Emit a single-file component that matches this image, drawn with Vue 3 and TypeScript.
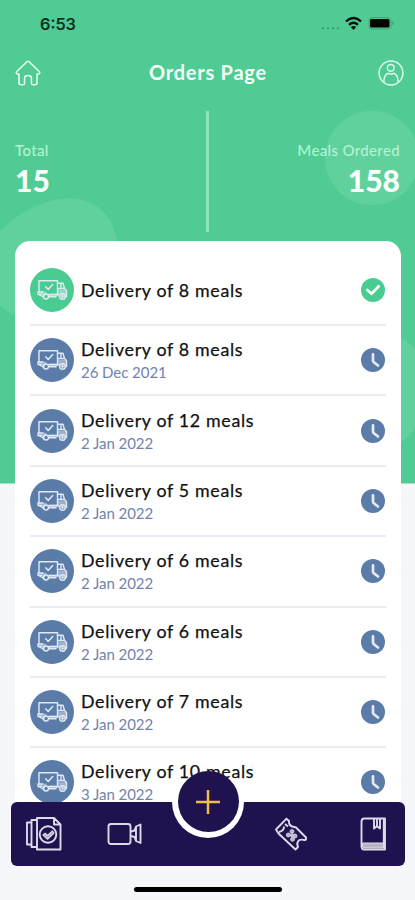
<script setup lang="ts">
interface Order {
  title: string
  date?: string
  done?: boolean
}

const orders: Order[] = [
  { title: 'Delivery of 8 meals', done: true },
  { title: 'Delivery of 8 meals', date: '26 Dec 2021' },
  { title: 'Delivery of 12 meals', date: '2 Jan 2022' },
  { title: 'Delivery of 5 meals', date: '2 Jan 2022' },
  { title: 'Delivery of 6 meals', date: '2 Jan 2022' },
  { title: 'Delivery of 6 meals', date: '2 Jan 2022' },
  { title: 'Delivery of 7 meals', date: '2 Jan 2022' },
  { title: 'Delivery of 10 meals', date: '3 Jan 2022' },
]
</script>

<template>
  <div class="screen">
    <svg class="backdrop" width="415" height="484" viewBox="0 0 415 484">
      <rect width="415" height="483.5" fill="#4fcb93" />
      <g fill="#60d09c">
        <path d="M0 231C25 206 50 198.500 72 198.500C98 198.500 116 220 117 245V300L30 319Q11 317 0 306Z" />
        <circle cx="372" cy="158" r="47.200" />
        <path d="M398 337Q409 341 415 349V428Q409 438 398 444Z" />
      </g>
    </svg>

    <div class="status">
      <span class="time">6:53</span>
      <svg width="76" height="16" viewBox="0 0 76 16">
        <g fill="#37996c">
          <circle cx="3" cy="12.300" r="1.100" /><circle cx="8" cy="12.300" r="1.100" />
          <circle cx="13" cy="12.300" r="1.100" /><circle cx="18" cy="12.300" r="1.100" />
        </g>
        <g fill="none" stroke="#07110c" stroke-width="2.300">
          <path d="M26 5.500Q33.500 -1.500 41 5.500" />
          <path d="M29 8.800Q33.500 4.600 38 8.800" />
        </g>
        <path d="M33.500 14l-2.700-2.900q2.700-2 5.400 0z" fill="#07110c" />
        <rect x="49" y="1.600" width="22" height="11.400" rx="3" fill="none" stroke="#3da577" />
        <rect x="50" y="3" width="19.500" height="8.600" rx="1.500" fill="#000" />
        <path d="M72.300 5.500v4q1.700-.7 1.700-2t-1.700-2z" fill="#3da577" />
      </svg>
    </div>

    <header class="header">
      <svg width="26" height="26" viewBox="0 0 26 26" fill="none" stroke="#e4faef" stroke-width="1.600" stroke-linejoin="round" stroke-linecap="round">
        <path d="M12 1.700Q13 .8 14 1.700L24.200 11.500Q25.400 13 23.800 14H22V22.500Q22 24.700 20 24.700H18Q16.400 24.700 16.400 23V18Q16.400 15.500 13 15.500T9.600 18V23Q9.600 24.700 8 24.700H6Q4 24.700 4 22.500V14H2.200Q.6 13 1.800 11.500Z" />
      </svg>
      <h1>Orders Page</h1>
      <svg width="26" height="26" viewBox="0 0 26 26" fill="none" stroke="#ddf8eb" stroke-width="1.500">
        <circle cx="13" cy="13" r="11.900" />
        <circle cx="12.800" cy="7.800" r="3.400" />
        <path d="M6 22.500V20Q6.500 14.500 10.500 13.300Q13 14.800 15.500 13.300Q19.500 14.500 20 20V22.500" />
      </svg>
    </header>

    <section class="summary">
      <div class="stat">
        <span class="label">Total</span>
        <strong>15</strong>
      </div>
      <div class="divider"></div>
      <div class="stat right">
        <span class="label">Meals Ordered</span>
        <strong>158</strong>
      </div>
    </section>

    <main class="card">
      <article v-for="(order, index) in orders" :key="index" class="order">
        <div class="badge" :class="{ done: order.done }">
          <svg width="32" height="22" viewBox="0 0 32 22" fill="none" stroke="#dfeaf4" stroke-width="1.400" stroke-linejoin="round" stroke-linecap="round">
            <path d="M3 12.500V1.700H21.500V15.500H13M21.500 4.200H27L28.500 9.500L30.500 11.500V17.500H29M21.500 9.500H28.500M25 4.200V9.500M20 17.700H13M5.500 15.500H2V13H7" />
            <path d="M9.700 7.800L12.200 10.500L16.700 5.500" stroke-width="1.500" />
            <path d="M13 16H22.500" stroke-width="2.600" opacity=".6" />
            <path d="M22 11.500H30V15.500H22Z" fill="#dfeaf4" opacity=".5" />
            <path d="M3 13.500H10L8 17.500Z" fill="#dfeaf4" opacity=".5" />
            <circle cx="10" cy="17.500" r="2.500" /><circle cx="26.500" cy="17.500" r="2.800" />
            <circle cx="26.500" cy="17.500" r=".7" /><path d="M3 15.500L7 18" />
          </svg>
        </div>
        <div class="info">
          <span class="title">{{ order.title }}</span>
          <span v-if="order.date" class="date">{{ order.date }}</span>
        </div>
        <svg class="state" width="24" height="24" viewBox="0 0 24 24" fill="none" stroke="#fff" stroke-linecap="round" stroke-linejoin="round">
          <circle cx="12" cy="12" r="12" :fill="order.done ? '#4acb91' : '#5b7ba8'" stroke="none" />
          <path v-if="order.done" d="M6.300 12L10.500 15.800L17.700 8.300" stroke-width="2.700" />
          <path v-else d="M12 6.300V12.500Q12 13.400 12.600 14L17 17.500" stroke="#e4ebf5" stroke-width="2.700" />
        </svg>
      </article>
    </main>

    <nav class="nav">
      <svg class="tab" width="38" height="36" viewBox="0 0 38 36" fill="none" stroke="#dddbea" stroke-width="1.900" stroke-linejoin="round">
        <path d="M12 2H29L35.500 8.500V33.500H12ZM29 2V8.500H35.500M12 4H6.500V31H12M6.500 6.500H2V28.500H6.500" />
        <circle cx="23" cy="18.500" r="8.300" />
        <path d="M18 19L20.200 17.300L22.500 19.500L27.500 15L29 17L22.500 23.200Z" fill="#aaa5c0" stroke-width="1.200" />
      </svg>
      <svg class="tab video" width="36" height="24" viewBox="0 0 36 24" fill="none" stroke="#dddbea" stroke-width="1.900" stroke-linejoin="round">
        <rect x="1.500" y="2" width="22" height="20" rx="2.500" />
        <path d="M24 9.500L27.500 8.500L29 4.500L33.500 2.500V21L29 19L27.500 15L24 14M29 5V19" />
      </svg>
      <svg class="tab ticket" width="34" height="34" viewBox="0 0 34 34" fill="none" stroke="#dddbea" stroke-width="1.900" stroke-linejoin="round">
        <path d="M2 12.500L12.500 1.700L15 4Q14.500 8 18.200 9.500Q20.500 10.200 22 10.500L32 20.500Q32.500 22.500 31 23.200Q25.500 21.500 24 24.500Q22.500 27 24 30L21.500 32.500L4.500 16.500Z" />
        <path d="M5 15Q10 14 10 9.500M11 7L14 9.500" />
        <g fill="#b8b4c9" stroke="#dddbea" stroke-width=".8">
          <circle cx="18" cy="14.500" r="2" /><circle cx="14.300" cy="18" r="2" />
          <circle cx="21" cy="19" r="2" /><circle cx="18.500" cy="22.300" r="2" />
          <circle cx="17.900" cy="18.300" r="1.500" />
        </g>
      </svg>
      <svg class="tab book" width="27" height="34" viewBox="0 0 27 34" fill="none" stroke="#dddbea" stroke-width="1.900" stroke-linejoin="round">
        <path d="M4 1.500H25V32.500H4Q1.500 32.500 1.500 29V5Q1.500 1.500 4 1.500Z" />
        <path d="M2.500 26H24V31H4Q1.500 30 2.500 26Z" fill="#b8b4c6" stroke-width="1" />
        <path d="M14 2V11.500L17 9L20 11.500V2M17 2V9" />
        <path d="M23.800 2V31" />
      </svg>
      <div class="notch"></div>
      <button class="add" aria-label="Add">
        <svg width="26" height="26" viewBox="0 0 26 26"><path d="M13 1V25M1 13H25" stroke="#ecc044" stroke-width="2.500" /></svg>
      </button>
    </nav>
    <div class="home-indicator"></div>
  </div>
</template>

<style>
body {
  margin: 0;
  background: #f5f7fa;
}
</style>

<style scoped>
.screen {
  position: relative;
  width: 415px;
  height: 900px;
  overflow: hidden;
  background: #f5f7fa;
  font-family: Lato, "Open Sans", sans-serif;
  display: flex;
  flex-direction: column;
}
.screen > * {
  position: relative;
  flex-shrink: 0;
}
.screen > .backdrop {
  position: absolute;
  top: 0;
  left: 0;
}
.status {
  height: 48px;
  box-sizing: border-box;
  padding: 0 19px 1px 40px;
  display: flex;
  align-items: center;
  justify-content: space-between;
}
.time {
  font: 500 16.500px Inter, sans-serif;
  letter-spacing: 0;
  color: #0d2b1d;
  -webkit-text-stroke: 0.2px #0d2b1d;
}
.header {
  height: 50px;
  box-sizing: border-box;
  padding: 0 11px 1px 15px;
  display: flex;
  align-items: center;
  justify-content: space-between;
}
h1 {
  margin: 0 3px 1px 0;
  font-size: 20px;
  line-height: 24px;
  letter-spacing: 0.75px;
  color: #f4fff9;
}
.summary {
  height: 143px;
  padding: 0 15px;
  display: grid;
  grid-template-columns: 1fr 3px 1fr;
}
.divider {
  margin-top: 13px;
  height: 121px;
  background: #8be5b9;
}
.stat {
  padding-top: 42px;
  display: flex;
  flex-direction: column;
  color: #fafffc;
}
.right {
  text-align: right;
}
.label {
  font-size: 15px;
  line-height: 20px;
  letter-spacing: 0.35px;
  font-weight: 500;
  color: #b5f2d2;
}
.stat strong {
  font-size: 30px;
  line-height: 40px;
  font-weight: 900;
}
.card {
  height: 561px;
  box-sizing: border-box;
  margin: 0 14px 0 15px;
  padding: 14.800px 15px 0;
  border-radius: 15px 15px 0 0;
  background: #fff;
  overflow: hidden;
}
.order {
  height: 70.350px;
  box-sizing: border-box;
  border-bottom: 2px solid #e8ebf4;
  display: flex;
  align-items: center;
}
.badge {
  width: 44px;
  height: 44px;
  border-radius: 50%;
  background: #5b7ba8;
  display: flex;
  align-items: center;
  justify-content: center;
}
.badge.done {
  background: #4acb91;
}
.state {
  margin-right: 1px;
}
.info {
  flex: 1;
  padding-left: 7px;
  display: flex;
  flex-direction: column;
  white-space: nowrap;
}
.title {
  font-size: 17.800px;
  line-height: 24px;
  letter-spacing: 0.68px;
  font-weight: 400;
  color: #111;
  -webkit-text-stroke: 0.25px #111;
}
.date {
  font-size: 15px;
  line-height: 22px;
  letter-spacing: -0.05px;
  color: #7183ad;
}
.nav {
  height: 64px;
  box-sizing: border-box;
  margin: 0 10px 0 11px;
  padding: 0 18px 0 14px;
  border-radius: 6px;
  background: #20124f;
  display: flex;
  align-items: center;
}
.tab {
  flex-shrink: 0;
}
.video {
  margin-left: 44px;
}
.ticket {
  margin-left: auto;
}
.book {
  margin-left: 52px;
}
.notch {
  position: absolute;
  left: 161px;
  top: 0;
  width: 72px;
  height: 36px;
  border-radius: 0 0 36px 36px;
  background: #fff;
}
.add {
  position: absolute;
  left: 166.500px;
  top: -31px;
  width: 61px;
  height: 61px;
  padding: 0;
  border: 0;
  border-radius: 50%;
  background: #20124f;
  display: flex;
  align-items: center;
  justify-content: center;
}
.home-indicator {
  width: 148px;
  height: 5px;
  margin: 21px 0 0 134px;
  border-radius: 3px;
  background: #000;
}
</style>
